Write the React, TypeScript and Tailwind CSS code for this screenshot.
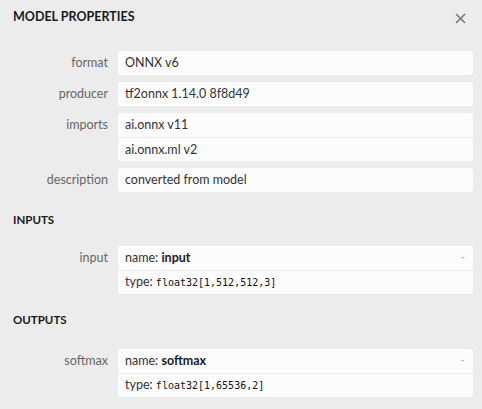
import React from "react";

type Line = { text?: string; name?: string; type?: string };
type Row = { label: string; lines: Line[] };

const sans = "font-['Lato','Open_Sans',sans-serif]";

const model: Row[] = [
  { label: "format", lines: [{ text: "ONNX v6" }] },
  { label: "producer", lines: [{ text: "tf2onnx 1.14.0 8f8d49" }] },
  { label: "imports", lines: [{ text: "ai.onnx v11" }, { text: "ai.onnx.ml v2" }] },
  { label: "description", lines: [{ text: "converted from model" }] },
];

const inputs: Row[] = [
  { label: "input", lines: [{ name: "input" }, { type: "float32[1,512,512,3]" }] },
];

const outputs: Row[] = [
  { label: "softmax", lines: [{ name: "softmax" }, { type: "float32[1,65536,2]" }] },
];

function LineView({ line, first }: { line: Line; first: boolean }) {
  return (
    <div
      className={`flex h-[24px] items-center px-[7px] ${first ? "" : "border-t border-[#ececec]"}`}
    >
      {line.text && <span>{line.text}</span>}
      {line.name && (
        <>
          <span>
            name: <b className="font-bold text-[#1a1a1a]">{line.name}</b>
          </span>
          <span className="ml-auto mr-[1px] text-[#bbb]">-</span>
        </>
      )}
      {line.type && (
        <span>
          type:{" "}
          <code className="font-['DejaVu_Sans_Mono',monospace] text-[10px] text-[#111]">
            {line.type}
          </code>
        </span>
      )}
    </div>
  );
}

function Rows({ rows }: { rows: Row[] }) {
  return (
    <div className="flex flex-col gap-[7px]">
      {rows.map((r) => (
        <div key={r.label} className="flex">
          <div className="w-[108px] shrink-0 pt-[4px] text-right text-[#666]">{r.label}</div>
          <div className="ml-[10px] w-[355px] rounded-[2px] bg-[#fcfcfc] text-[#333]">
            {r.lines.map((l, i) => (
              <LineView key={i} line={l} first={i === 0} />
            ))}
          </div>
        </div>
      ))}
    </div>
  );
}

export default function App() {
  return (
    <div className={`h-[409px] w-[482px] overflow-hidden bg-[#ececec] text-[12.5px] leading-[16px] ${sans}`}>
      <div className="flex items-center justify-between px-[13px] pt-[8px]">
        <div className="text-[12.5px] font-bold leading-[18px] text-[#1a1a1a]">MODEL PROPERTIES</div>
        <svg width="11" height="11" viewBox="0 0 11 11" className="mr-[3px] mt-[2px]">
          <path d="M1 1L10 10M10 1L1 10" stroke="#777" strokeWidth="1.6" />
        </svg>
      </div>
      <div className="mt-[25px]">
        <Rows rows={model} />
      </div>
      <div className="mt-[20px] px-[13px] text-[11.5px] font-bold text-[#1a1a1a]">INPUTS</div>
      <div className="mt-[18px]">
        <Rows rows={inputs} />
      </div>
      <div className="mt-[18px] px-[13px] text-[11.5px] font-bold text-[#1a1a1a]">OUTPUTS</div>
      <div className="mt-[21px]">
        <Rows rows={outputs} />
      </div>
    </div>
  );
}
